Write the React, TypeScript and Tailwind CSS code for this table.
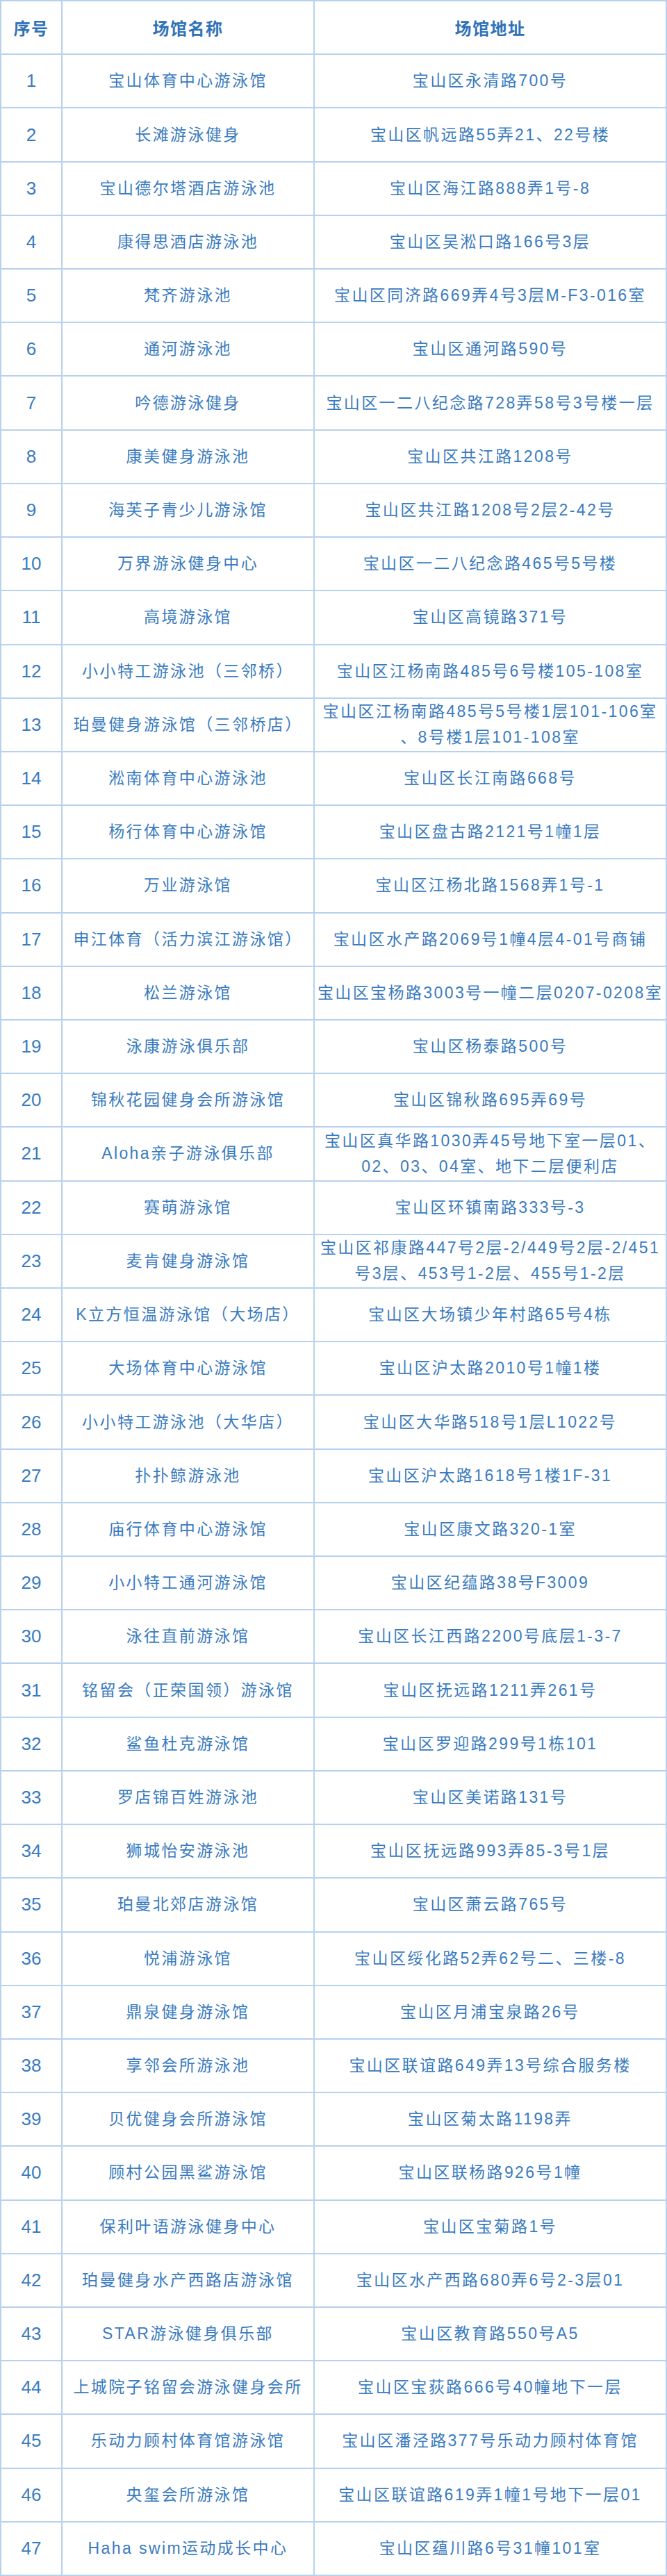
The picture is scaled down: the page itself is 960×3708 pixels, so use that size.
const rows: [string, string, string[]][] = [
  ["1", "宝山体育中心游泳馆", ["宝山区永清路700号"]],
  ["2", "长滩游泳健身", ["宝山区帆远路55弄21、22号楼"]],
  ["3", "宝山德尔塔酒店游泳池", ["宝山区海江路888弄1号-8"]],
  ["4", "康得思酒店游泳池", ["宝山区吴淞口路166号3层"]],
  ["5", "梵齐游泳池", ["宝山区同济路669弄4号3层M-F3-016室"]],
  ["6", "通河游泳池", ["宝山区通河路590号"]],
  ["7", "吟德游泳健身", ["宝山区一二八纪念路728弄58号3号楼一层"]],
  ["8", "康美健身游泳池", ["宝山区共江路1208号"]],
  ["9", "海芙子青少儿游泳馆", ["宝山区共江路1208号2层2-42号"]],
  ["10", "万界游泳健身中心", ["宝山区一二八纪念路465号5号楼"]],
  ["11", "高境游泳馆", ["宝山区高镜路371号"]],
  ["12", "小小特工游泳池（三邻桥）", ["宝山区江杨南路485号6号楼105-108室"]],
  ["13", "珀曼健身游泳馆（三邻桥店）", ["宝山区江杨南路485号5号楼1层101-106室", "、8号楼1层101-108室"]],
  ["14", "淞南体育中心游泳池", ["宝山区长江南路668号"]],
  ["15", "杨行体育中心游泳馆", ["宝山区盘古路2121号1幢1层"]],
  ["16", "万业游泳馆", ["宝山区江杨北路1568弄1号-1"]],
  ["17", "申江体育（活力滨江游泳馆）", ["宝山区水产路2069号1幢4层4-01号商铺"]],
  ["18", "松兰游泳馆", ["宝山区宝杨路3003号一幢二层0207-0208室"]],
  ["19", "泳康游泳俱乐部", ["宝山区杨泰路500号"]],
  ["20", "锦秋花园健身会所游泳馆", ["宝山区锦秋路695弄69号"]],
  ["21", "Aloha亲子游泳俱乐部", ["宝山区真华路1030弄45号地下室一层01、", "02、03、04室、地下二层便利店"]],
  ["22", "赛萌游泳馆", ["宝山区环镇南路333号-3"]],
  ["23", "麦肯健身游泳馆", ["宝山区祁康路447号2层-2/449号2层-2/451", "号3层、453号1-2层、455号1-2层"]],
  ["24", "K立方恒温游泳馆（大场店）", ["宝山区大场镇少年村路65号4栋"]],
  ["25", "大场体育中心游泳馆", ["宝山区沪太路2010号1幢1楼"]],
  ["26", "小小特工游泳池（大华店）", ["宝山区大华路518号1层L1022号"]],
  ["27", "扑扑鲸游泳池", ["宝山区沪太路1618号1楼1F-31"]],
  ["28", "庙行体育中心游泳馆", ["宝山区康文路320-1室"]],
  ["29", "小小特工通河游泳馆", ["宝山区纪蕴路38号F3009"]],
  ["30", "泳往直前游泳馆", ["宝山区长江西路2200号底层1-3-7"]],
  ["31", "铭留会（正荣国领）游泳馆", ["宝山区抚远路1211弄261号"]],
  ["32", "鲨鱼杜克游泳馆", ["宝山区罗迎路299号1栋101"]],
  ["33", "罗店锦百姓游泳池", ["宝山区美诺路131号"]],
  ["34", "狮城怡安游泳池", ["宝山区抚远路993弄85-3号1层"]],
  ["35", "珀曼北郊店游泳馆", ["宝山区萧云路765号"]],
  ["36", "悦浦游泳馆", ["宝山区绥化路52弄62号二、三楼-8"]],
  ["37", "鼎泉健身游泳馆", ["宝山区月浦宝泉路26号"]],
  ["38", "享邻会所游泳池", ["宝山区联谊路649弄13号综合服务楼"]],
  ["39", "贝优健身会所游泳馆", ["宝山区菊太路1198弄"]],
  ["40", "顾村公园黑鲨游泳馆", ["宝山区联杨路926号1幢"]],
  ["41", "保利叶语游泳健身中心", ["宝山区宝菊路1号"]],
  ["42", "珀曼健身水产西路店游泳馆", ["宝山区水产西路680弄6号2-3层01"]],
  ["43", "STAR游泳健身俱乐部", ["宝山区教育路550号A5"]],
  ["44", "上城院子铭留会游泳健身会所", ["宝山区宝荻路666号40幢地下一层"]],
  ["45", "乐动力顾村体育馆游泳馆", ["宝山区潘泾路377号乐动力顾村体育馆"]],
  ["46", "央玺会所游泳馆", ["宝山区联谊路619弄1幢1号地下一层01"]],
  ["47", "Haha swim运动成长中心", ["宝山区蕴川路6号31幢101室"]],
];

const cell =
  "flex items-center justify-center text-center border-r-2 border-b-2 border-[#b6d2ee] whitespace-nowrap";
const body =
  "text-[23px] tracking-[2.4px] leading-[37px] font-['Liberation_Sans','Noto_Sans_CJK_SC',sans-serif]";

export default function App() {
  return (
    <div className="w-[960px] h-[3708px] bg-white text-[#3a7bc0] border-l-2 border-t-2 border-[#b6d2ee] grid grid-cols-[88px_363px_1fr] grid-rows-[repeat(48,minmax(0,1fr))]">
      {/* header */}
      <div className={`${cell} text-[24px] font-bold tracking-[1.5px] text-[#2f72b8] font-['Noto_Sans_CJK_SC',sans-serif]`}>
        序号
      </div>
      <div className={`${cell} text-[24px] font-bold tracking-[1.5px] text-[#2f72b8] font-['Noto_Sans_CJK_SC',sans-serif]`}>
        场馆名称
      </div>
      <div className={`${cell} text-[24px] font-bold tracking-[1.5px] text-[#2f72b8] font-['Noto_Sans_CJK_SC',sans-serif]`}>
        场馆地址
      </div>

      {rows.map(([no, name, addr]) => (
        <div key={no} className="contents">
          <div className={`${cell} text-[26px] font-['Liberation_Sans',sans-serif]`}>{no}</div>
          <div className={`${cell} ${body}`}>{name}</div>
          <div className={`${cell} ${body} flex-col`}>
            {addr.map((line) => (
              <span key={line}>{line}</span>
            ))}
          </div>
        </div>
      ))}
    </div>
  );
}
